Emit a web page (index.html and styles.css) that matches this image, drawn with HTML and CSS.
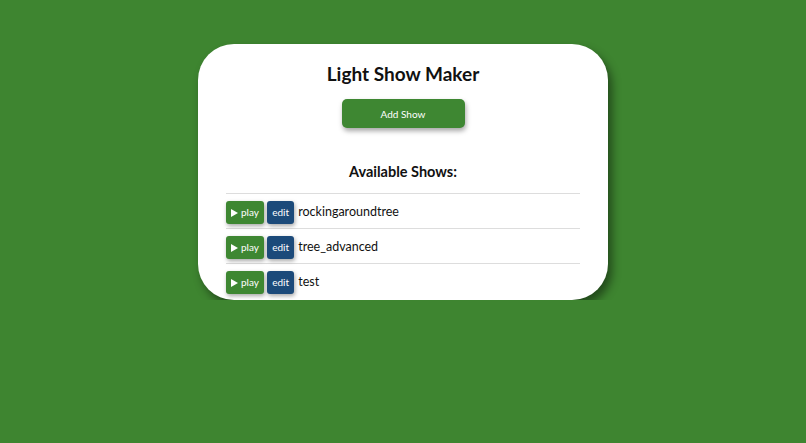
FILE: index.html
```html
<!DOCTYPE html>
<html lang="en">
<head>
  <meta charset="UTF-8" />
  <title>Light Show Maker</title>
  <link rel="stylesheet" href="styles.css">
</head>
<body>

<div class="panel">
  <h1>Light Show Maker</h1>
  <button class="btn-add">Add Show</button>

  <h2>Available Shows:</h2>
  <table class="shows">
    <tr>
      <td>
        <button class="btn-play"><svg class="tri" viewBox="0 0 7 8"><path d="M0 0L7 4L0 8Z" fill="white"/></svg>play</button>
        <button class="btn-edit">edit</button>
        <span class="show-name">rockingaroundtree</span>
      </td>
    </tr>
    <tr>
      <td>
        <button class="btn-play"><svg class="tri" viewBox="0 0 7 8"><path d="M0 0L7 4L0 8Z" fill="white"/></svg>play</button>
        <button class="btn-edit">edit</button>
        <span class="show-name">tree_advanced</span>
      </td>
    </tr>
    <tr>
      <td>
        <button class="btn-play"><svg class="tri" viewBox="0 0 7 8"><path d="M0 0L7 4L0 8Z" fill="white"/></svg>play</button>
        <button class="btn-edit">edit</button>
        <span class="show-name">test</span>
      </td>
    </tr>
  </table>
</div>

</body>
</html>
```

FILE: styles.css
```css
body {
  margin: 0;
  padding-top: 44px;
  background: #3e8530;
  font-family: Lato, "Noto Sans", sans-serif;
  color: #111;
}
.panel {
  background: white;
  width: 354px;
  margin: 0 auto;
  padding: 18px 28px 2px;
  border-radius: 36px;
  box-shadow: 4px 6px 10px rgba(0,0,0,0.45);
  text-align: center;
}
h1 {
  margin: 0;
  font-size: 19px;
  font-weight: bold;
  line-height: 24px;
}
h2 {
  margin: 34px 0 0;
  font-size: 14.5px;
  font-weight: bold;
  line-height: 20px;
}
button {
  border: none;
  color: white;
  font-family: inherit;
  cursor: pointer;
}
.btn-add {
  margin-top: 13px;
  width: 123px;
  height: 29px;
  background: #3e8732;
  border-radius: 5px;
  font-size: 10px;
  box-shadow: 1px 3px 5px rgba(0,0,0,0.35);
}
.shows {
  width: 100%;
  border-collapse: collapse;
  margin-top: 11px;
  text-align: left;
}
.shows td {
  border-top: 1px solid #ddd;
  padding: 6px 0 4px;
  height: 24px;
  white-space: nowrap;
}
.btn-play, .btn-edit {
  height: 23px;
  padding: 0 4px;
  font-size: 10px;
  border-radius: 3px;
  box-shadow: 1px 2px 4px rgba(0,0,0,0.35);
  vertical-align: middle;
}
.btn-play {
  width: 38px;
  background: #3e8732;
}
.tri {
  width: 7px;
  height: 8px;
  margin-right: 3px;
  vertical-align: -1px;
}
.btn-edit {
  width: 27px;
  margin-left: -1px;
  background: #1c4a7a;
}
.show-name {
  font-size: 12.5px;
  vertical-align: middle;
}
```
